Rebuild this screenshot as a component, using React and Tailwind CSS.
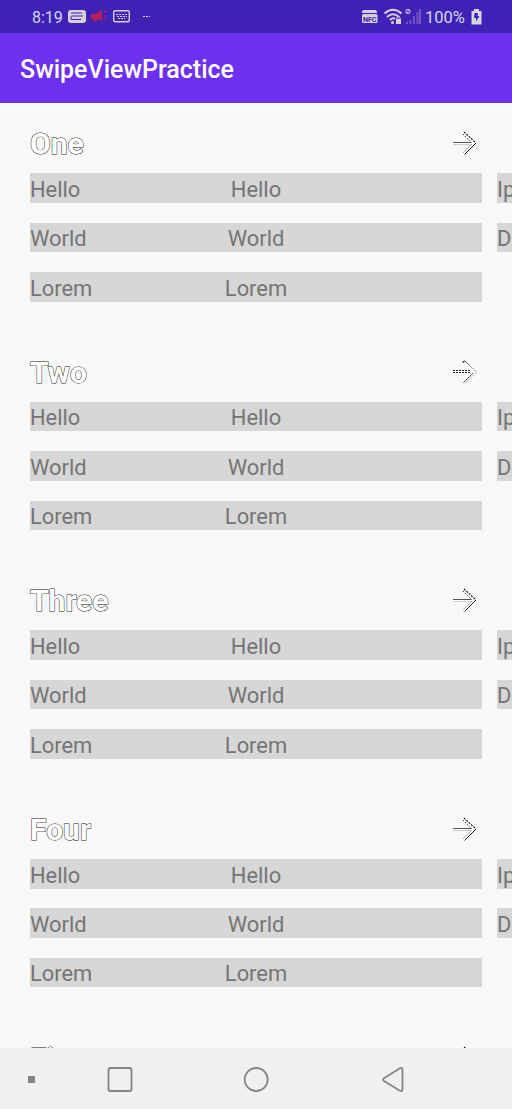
import React from 'react';

const sections = [
  { title: 'One', variant: 0 },
  { title: 'Two', variant: 1 },
  { title: 'Three', variant: 0 },
  { title: 'Four', variant: 0 },
  { title: 'Five', variant: 2 },
];

const rows = [
  { text: 'Hello', next: 'Ipsum' },
  { text: 'World', next: 'Dolor' },
  { text: 'Lorem', next: null },
];

function ArrowIcon({ variant }) {
  return (
    <svg className="h-[26px] w-[26px]" viewBox="0 0 26 26" fill="none">
      <path d="M1 13H22M12 2L23 13L12 24" stroke="#fff" strokeWidth="3" />
      {variant === 1 ? (
        <g stroke="#222">
          <path d="M1 11.5H18M1 13.5H18" strokeDasharray="2 1" />
          <path d="M11.5 23.5L21 14" strokeDasharray="2 .8" />
          <path d="M11 4V2.5L13 2" />
          <path d="M13 2L17 6" stroke="#555" />
          <path d="M17 6L24.5 13L13 24.5" stroke="#aaa" />
        </g>
      ) : (
        <g>
          <path d="M1 12.5H19" stroke="#555" />
          <path d="M1 14.5H19" stroke="#ccc" />
          <path d="M12 2L24 13" stroke="#111" strokeWidth="1.2" strokeDasharray="2 1.2" />
          <path d="M11 4L20 13" stroke="#333" strokeDasharray="1.5 1.5" />
          <path d="M24 13L12.5 24.5" stroke="#111" />
          <path d="M20 14L11 23" stroke="#aaa" />
        </g>
      )}
    </svg>
  );
}

function Bar({ text, next }) {
  return (
    <div className="flex h-[29.5px] gap-[15px] text-[21.9px] leading-[30px] text-[#757575]">
      <div className="grid w-[452px] shrink-0 grid-cols-[1fr_auto_1fr] bg-[repeating-conic-gradient(#d3d3d3_0_25%,#dadada_0_50%)] bg-[size:2px_2px]">
        <span className="pt-[1.5px]">{text}</span>
        <span className="pt-[1.5px]">{text}</span>
      </div>
      {next && (
        <div className="w-[452px] shrink-0 bg-[repeating-conic-gradient(#d3d3d3_0_25%,#dadada_0_50%)] bg-[size:2px_2px] pt-[1.5px]">
          {next}
        </div>
      )}
    </div>
  );
}

function Section({ title, variant }) {
  return (
    <section className="h-[228.6px] shrink-0 pl-[30px]">
      <div className="flex h-[70.3px] items-start justify-between pr-[34px] pt-[23.3px]">
        <h2 className="text-[30px] font-bold leading-[36px] text-white [-webkit-text-stroke:1px_#222] [paint-order:stroke_fill]">
          {title}
        </h2>
        <div className="pt-[4px]">
          <ArrowIcon variant={variant} />
        </div>
      </div>
      <div className="flex flex-col gap-[19.9px]">
        {rows.map((row) => (
          <Bar key={row.text} text={row.text} next={row.next} />
        ))}
      </div>
    </section>
  );
}

function StatusBar() {
  return (
    <header className="flex h-[33px] shrink-0 items-center bg-[#3e22b6] pl-[32px] pr-[30px] text-[16px] text-[#d8d4ea]">
      <span className="w-[36px] pt-[2px]">8:19</span>
      <svg className="h-[33px] w-[90px]" viewBox="68 0 90 33" fill="none">
        <rect x="68" y="10" width="18" height="13" rx="3" fill="#d5d0d9" />
        <path d="M71 13H82M71 19.5V17Q71 16 72 16H83M71 19.5H81" stroke="#3e22b6" strokeWidth="1" />
        <path d="M91 14H95L102 10V21L97 19V22H94V19H91Z" fill="#b41e5d" />
        <path d="M104 12L106 11M104 16H106M104 19L106 20" stroke="#b41e5d" strokeWidth="1.5" />
        <rect x="113.7" y="10.7" width="15.6" height="11" rx="1.5" stroke="#d5d0d9" strokeWidth="1.4" />
        <path d="M116 14.5H127M117 16.5H127M118 18.5H125" stroke="#d5d0d9" strokeWidth="1" strokeDasharray="2 1" />
        <path d="M143 16.5H150" stroke="#d5d0d9" strokeDasharray="2 1" />
      </svg>
      <div className="ml-auto flex items-center">
        <svg className="h-[33px] w-[64px]" viewBox="361 0 64 33" fill="none">
          <path d="M362 13V11.5Q362 10 364 10H375Q377 10 377 12V13Z" fill="#d5d0d9" />
          <rect x="362" y="14" width="15.5" height="9" rx="1.5" fill="#d5d0d9" />
          <text x="363" y="21.5" fontSize="7.5" fontWeight="bold" textLength="13.5" lengthAdjust="spacingAndGlyphs" fill="#3e22b6">NFC</text>
          <path d="M384.5 13.5Q393 6 401.5 13.5M387 17Q393 11.5 399 17M390 20Q393 17 395 19" stroke="#d5d0d9" strokeWidth="2" />
          <circle cx="392.5" cy="22.5" r="1.5" fill="#d5d0d9" />
          <path d="M397 19V17.5Q398.5 15.5 400 17.5V19" stroke="#d5d0d9" />
          <rect x="396" y="19" width="5" height="5" fill="#d5d0d9" />
          <circle cx="408" cy="11.5" r="2.2" stroke="#d5d0d9" />
          <path d="M406.5 13L409.5 10" stroke="#d5d0d9" />
          <path d="M407 22V24M410.5 20V24M414 16V24M417.5 12V24M420 9V24" stroke="#7651c8" strokeWidth="2" />
        </svg>
        <span className="w-[46px] pt-[3px] text-[16.5px]">100%</span>
        <svg className="h-[33px] w-[11px]" viewBox="0 0 11 33">
          <path d="M3 9H8V11H10.5V24.5H.5V11H3Z" fill="#d8d6dc" />
          <path d="M3.5 13H7L6.5 16H8.5L5 21.5V18H3Z" fill="#3e22b6" />
        </svg>
      </div>
    </header>
  );
}

function NavigationBar() {
  return (
    <nav className="h-[61px] shrink-0 bg-[#f0f0f0]">
      <svg className="h-full w-full" viewBox="0 1048 512 61" fill="none" stroke="#858585" strokeWidth="1.8">
        <rect x="28" y="1076" width="7" height="7" fill="#858585" stroke="none" />
        <rect x="108.5" y="1068" width="23" height="23" rx="2" />
        <circle cx="256.2" cy="1079.5" r="11.5" />
        <path d="M384 1078.3L399.5 1068.5Q402.5 1067 402.5 1070V1089Q402.5 1092 399.5 1090.5L384 1081Q382 1079.5 384 1078.3Z" />
      </svg>
    </nav>
  );
}

export default function App() {
  return (
    <div className="flex h-[1109px] w-[512px] flex-col overflow-hidden bg-[#f0f0f0] [font-family:Roboto,sans-serif]">
      <StatusBar />
      <div className="flex h-[70px] shrink-0 items-center bg-[#6e30ef] pl-[20px] pt-[3px] text-[25px] font-medium text-white">
        SwipeViewPractice
      </div>
      <main className="flex min-h-0 flex-1 flex-col overflow-hidden bg-[repeating-conic-gradient(#f2f2f2_0_25%,#ffffff_0_50%)] bg-[size:2px_2px]">
        {sections.map((section) => (
          <Section key={section.title} title={section.title} variant={section.variant} />
        ))}
      </main>
      <NavigationBar />
    </div>
  );
}
